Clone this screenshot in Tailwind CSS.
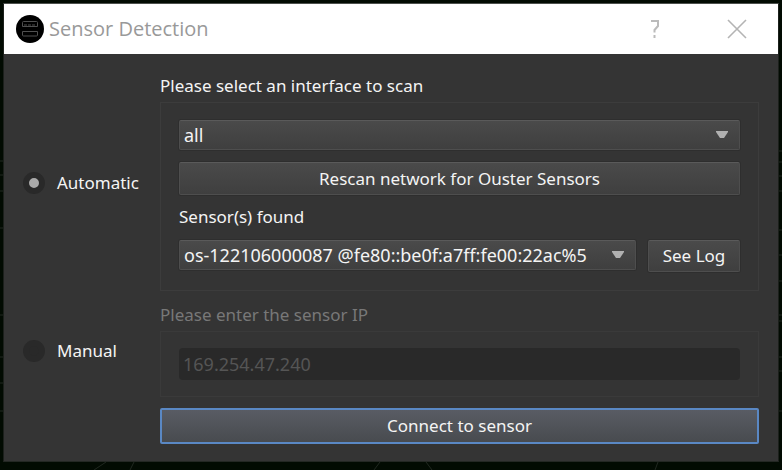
<!DOCTYPE html>
<html lang="en">
<head>
<meta charset="utf-8">
<meta name="viewport" content="width=device-width, initial-scale=1">
<title>Sensor Detection</title>
<script src="https://cdn.jsdelivr.net/npm/@tailwindcss/browser@4"></script>
</head>
<body class="relative min-h-screen bg-[#020b02] pt-[3px] px-[3px] pb-2 font-['Noto_Sans','Open_Sans',sans-serif] text-[17px] leading-[22px] text-[#f4f4f4]">
<!-- Faint scan rings behind the dialog -->
<svg class="absolute inset-0 -z-10 h-full w-full" viewBox="0 0 782 470" preserveAspectRatio="none" fill="none" stroke="#202820" aria-hidden="true">
  <path d="M0 161h4M0 175h4M0 191h4M0 228h4M0 315h4M0 357h4M0 383h4M0 411h4M778 151h4M778 162h4M778 176h4M778 191h4M778 230h4M778 255h4M778 281h4M778 315h4M778 321h4M778 357h4M778 371h4M778 411h4M94 470l12-8M130 470l4-8M374 470l6-8M426 462l6 8M655 470l3-8"/>
</svg>
<main class="border border-t-[#4c504c] border-x-[#1c201c] border-b-[#242824] bg-[#343434]">
  <header class="flex h-[50px] items-center bg-white pl-3 pr-[31px] text-[#999999]">
    <svg class="size-7" viewBox="0 0 28 28" aria-hidden="true">
      <circle cx="14" cy="14" r="14" fill="#000"/>
      <g fill="none" stroke="#505050" stroke-width="1">
        <path d="M6.500 11.500V7.500q0-1 1-1h13q1 0 1 1v4z"/>
        <path d="M8 10h12" stroke-dasharray="3 1"/>
        <path d="M6.500 16.500h15v3.500q0 1-1 1h-13q-1 0-1-1z"/>
      </g>
    </svg>
    <h1 class="ml-[5px] flex-1 font-['Open_Sans','Noto_Sans',sans-serif] text-[20px] leading-7">Sensor Detection</h1>
    <button type="button" aria-label="Help" class="mr-[62px] flex h-7 w-5 items-center justify-center">
      <svg class="h-5 w-3" viewBox="0 0 12 20" fill="none" stroke="#bbbbbb" stroke-width="2" aria-hidden="true"><path d="M2 2h7v5L5.500 11v2.500M5.500 16v3"/></svg>
    </button>
    <button type="button" aria-label="Close" class="flex size-5 items-center justify-center">
      <svg class="size-5" viewBox="0 0 20 20" fill="none" stroke="#b4b4b4" stroke-width="1.600" aria-hidden="true"><path d="M1 1l18 18M19 1L1 19"/></svg>
    </button>
  </header>
  <form class="grid grid-cols-[137px_1fr] px-[19px] pt-[21px] pb-[17px]">
    <label class="flex items-center gap-3 self-center">
      <input type="radio" name="mode" checked class="size-[22px] appearance-none rounded-full border-6 border-[#292929] bg-[#2a2a2a] checked:bg-[#aaaaaa]">
      Automatic
    </label>
    <section>
      <label for="iface" class="block">Please select an interface to scan</label>
      <div class="mt-[5px] border border-[#3c3c3c] px-[18px] pt-[17px] pb-[18px]">
        <div class="relative">
          <select id="iface" class="block h-[30px] w-full appearance-none rounded-xs border border-[#4e4e4e] border-t-[#5a5a5a] bg-linear-to-b from-[#4a4a4a] to-[#3f3f3f] pl-1 text-[18px] shadow-[0_0_0_1px_#2e2e2e]">
            <option>all</option>
          </select>
          <svg class="pointer-events-none absolute right-3 top-[11px] h-2 w-3" viewBox="0 0 12 8" aria-hidden="true"><path d="M0 0h12v1L8 7H4L0 1z" fill="#b0b0b0"/></svg>
        </div>
        <button type="button" class="mt-3 block h-[33px] w-full rounded-xs border border-[#4e4e4e] border-t-[#5a5a5a] bg-linear-to-b from-[#4a4a4a] to-[#3f3f3f] shadow-[0_0_0_1px_#2e2e2e]">Rescan network for Ouster Sensors</button>
        <label for="found" class="mt-[11px] block">Sensor(s) found</label>
        <div class="mt-3 flex items-start gap-3">
          <div class="relative min-w-0 flex-1">
            <select id="found" class="block h-[30px] w-full appearance-none rounded-xs border border-[#4e4e4e] border-t-[#5a5a5a] bg-linear-to-b from-[#4a4a4a] to-[#3f3f3f] pl-1 text-[18px] shadow-[0_0_0_1px_#2e2e2e]">
              <option>os-122106000087 @fe80::be0f:a7ff:fe00:22ac%5</option>
            </select>
            <svg class="pointer-events-none absolute right-3 top-[11px] h-2 w-3" viewBox="0 0 12 8" aria-hidden="true"><path d="M0 0h12v1L8 7H4L0 1z" fill="#b0b0b0"/></svg>
          </div>
          <button type="button" class="h-8 w-[92px] rounded-xs border border-[#4e4e4e] border-t-[#5a5a5a] bg-linear-to-b from-[#4a4a4a] to-[#3f3f3f] shadow-[0_0_0_1px_#2e2e2e]">See Log</button>
        </div>
      </div>
    </section>
    <label class="mt-[13px] flex items-center gap-3 self-center">
      <input type="radio" name="mode" class="size-[22px] appearance-none rounded-full border-6 border-[#292929] bg-[#292929] checked:bg-[#aaaaaa]">
      Manual
    </label>
    <section class="mt-[13px]">
      <label for="ip" class="block text-[#787878]">Please enter the sensor IP</label>
      <div class="mt-[5px] border border-[#3a3a3a] px-[18px] py-4">
        <input id="ip" type="text" disabled value="169.254.47.240" class="block h-8 w-full rounded-sm bg-[#292929] px-1 text-[18px] text-[#555555]">
      </div>
    </section>
    <button type="submit" class="col-start-2 mt-[11px] h-9 rounded-xs border-2 border-[#5a88c4] bg-linear-to-b from-[#595c64] to-[#484b4f]">Connect to sensor</button>
  </form>
</main>
</body>
</html>
